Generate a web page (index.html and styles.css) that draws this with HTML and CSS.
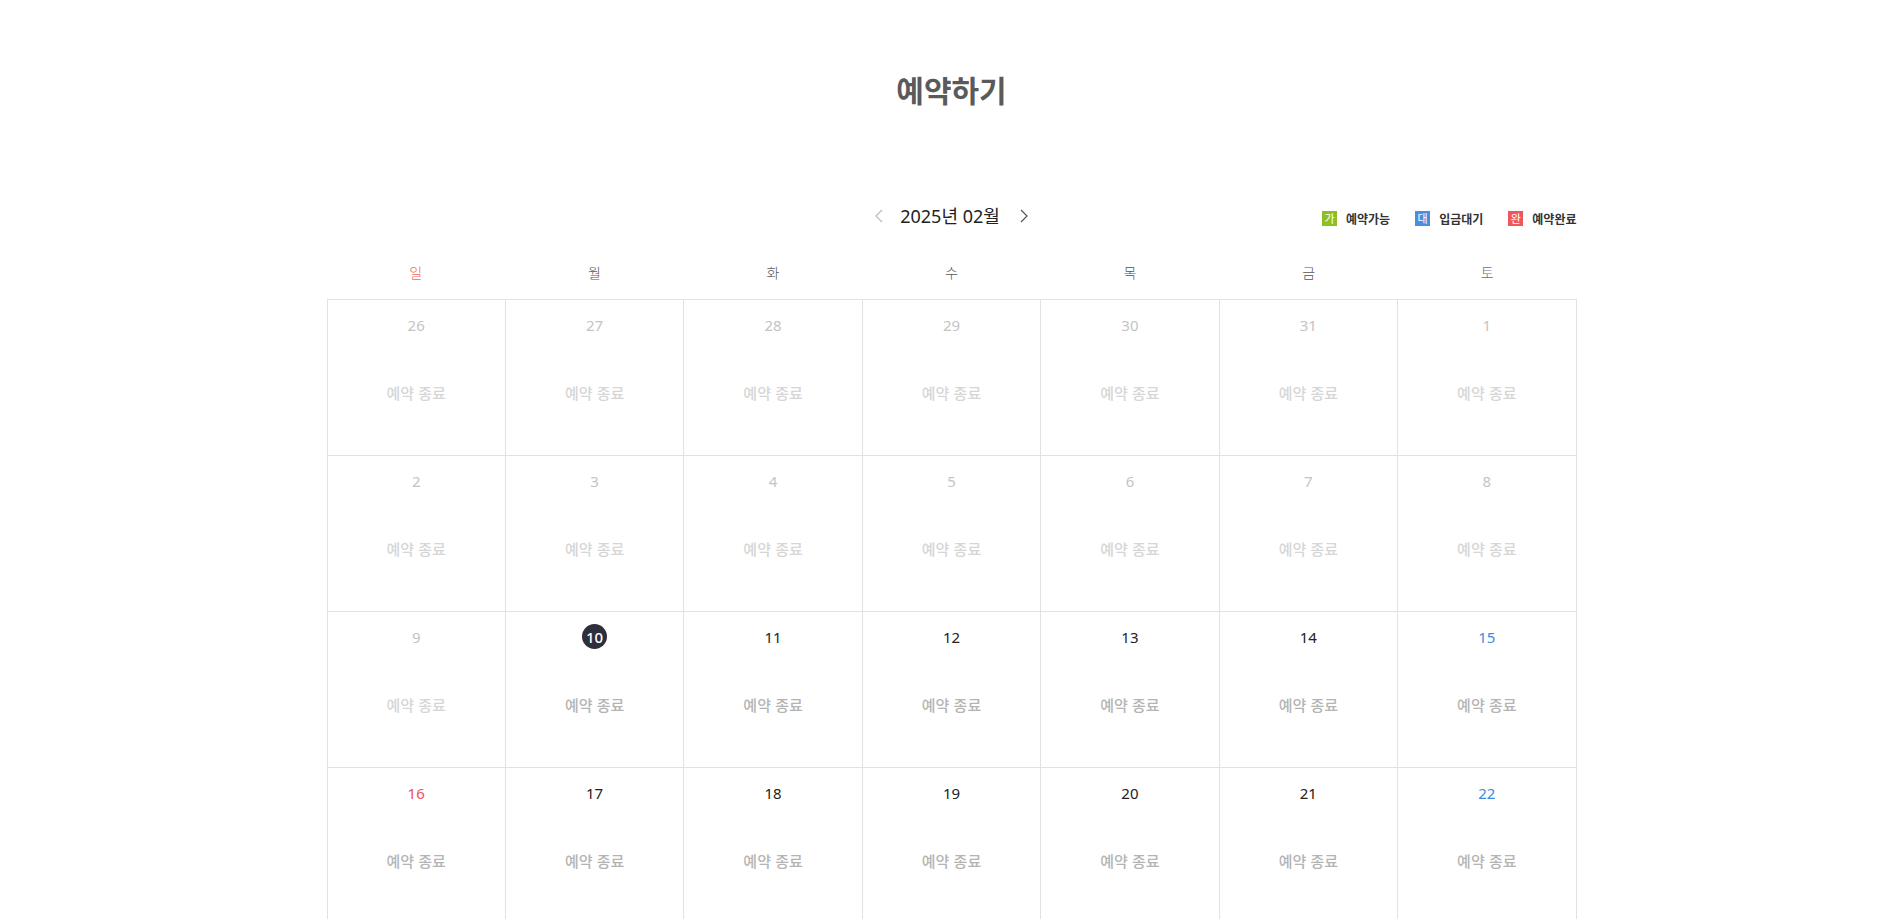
FILE: index.html
```
<!DOCTYPE html>
<html lang="ko">
<head>
<meta charset="utf-8">
<title>예약하기</title>
<link rel="stylesheet" href="styles.css">
</head>
<body>
<main class="page">
  <h1 class="title">예약하기</h1>
  <section class="calendar">
    <div class="cal-top">
      <div class="spacer"></div>
      <div class="month-nav">
        <button class="nav-btn prev" aria-label="이전 달"><svg width="8" height="14" viewBox="0 0 8 14"><polyline points="7,1 1,7 7,13" fill="none" stroke="#bbbbbb" stroke-width="1.2"/></svg></button>
        <span class="month-label">2025년 02월</span>
        <button class="nav-btn next" aria-label="다음 달"><svg width="8" height="14" viewBox="0 0 8 14"><polyline points="1,1 7,7 1,13" fill="none" stroke="#555555" stroke-width="1.2"/></svg></button>
      </div>
      <ul class="legend">
        <li><span class="badge green">가</span>예약가능</li>
        <li><span class="badge blue">대</span>입금대기</li>
        <li><span class="badge red">완</span>예약완료</li>
      </ul>
    </div>
    <div class="weekdays">
      <div class="wd sun">일</div>
      <div class="wd">월</div>
      <div class="wd">화</div>
      <div class="wd">수</div>
      <div class="wd">목</div>
      <div class="wd">금</div>
      <div class="wd sat">토</div>
    </div>
    <div class="grid">
      <div class="cell past"><span class="num">26</span><span class="status">예약 종료</span></div>
      <div class="cell past"><span class="num">27</span><span class="status">예약 종료</span></div>
      <div class="cell past"><span class="num">28</span><span class="status">예약 종료</span></div>
      <div class="cell past"><span class="num">29</span><span class="status">예약 종료</span></div>
      <div class="cell past"><span class="num">30</span><span class="status">예약 종료</span></div>
      <div class="cell past"><span class="num">31</span><span class="status">예약 종료</span></div>
      <div class="cell past"><span class="num">1</span><span class="status">예약 종료</span></div>

      <div class="cell past"><span class="num">2</span><span class="status">예약 종료</span></div>
      <div class="cell past"><span class="num">3</span><span class="status">예약 종료</span></div>
      <div class="cell past"><span class="num">4</span><span class="status">예약 종료</span></div>
      <div class="cell past"><span class="num">5</span><span class="status">예약 종료</span></div>
      <div class="cell past"><span class="num">6</span><span class="status">예약 종료</span></div>
      <div class="cell past"><span class="num">7</span><span class="status">예약 종료</span></div>
      <div class="cell past"><span class="num">8</span><span class="status">예약 종료</span></div>

      <div class="cell past"><span class="num">9</span><span class="status">예약 종료</span></div>
      <div class="cell today"><span class="num">10</span><span class="status">예약 종료</span></div>
      <div class="cell"><span class="num">11</span><span class="status">예약 종료</span></div>
      <div class="cell"><span class="num">12</span><span class="status">예약 종료</span></div>
      <div class="cell"><span class="num">13</span><span class="status">예약 종료</span></div>
      <div class="cell"><span class="num">14</span><span class="status">예약 종료</span></div>
      <div class="cell sat"><span class="num">15</span><span class="status">예약 종료</span></div>

      <div class="cell sun"><span class="num">16</span><span class="status">예약 종료</span></div>
      <div class="cell"><span class="num">17</span><span class="status">예약 종료</span></div>
      <div class="cell"><span class="num">18</span><span class="status">예약 종료</span></div>
      <div class="cell"><span class="num">19</span><span class="status">예약 종료</span></div>
      <div class="cell"><span class="num">20</span><span class="status">예약 종료</span></div>
      <div class="cell"><span class="num">21</span><span class="status">예약 종료</span></div>
      <div class="cell sat"><span class="num">22</span><span class="status">예약 종료</span></div>

      <div class="cell sun"><span class="num">23</span><span class="status">예약 종료</span></div>
      <div class="cell"><span class="num">24</span><span class="status">예약 종료</span></div>
      <div class="cell"><span class="num">25</span><span class="status">예약 종료</span></div>
      <div class="cell"><span class="num">26</span><span class="status">예약 종료</span></div>
      <div class="cell"><span class="num">27</span><span class="status">예약 종료</span></div>
      <div class="cell"><span class="num">28</span><span class="status">예약 종료</span></div>
      <div class="cell past"><span class="num">1</span><span class="status">예약 종료</span></div>
    </div>
  </section>
</main>
</body>
</html>
```
FILE: styles.css
```
* { box-sizing: border-box; }
html, body { margin: 0; padding: 0; background: #fff; }
body {
  font-family: "Noto Sans", "Noto Sans CJK KR", sans-serif;
  color: #222;
}
.page { padding-top: 69px; padding-bottom: 80px; }
.title {
  margin: 0;
  text-align: center;
  font-family: "Noto Sans CJK KR", sans-serif;
  font-size: 30px;
  line-height: 40px;
  font-weight: 700;
  color: #5a5a5a;
}
.calendar { width: 1250px; margin: 92px auto 0; }
.cal-top {
  display: grid;
  grid-template-columns: 1fr auto 1fr;
  align-items: center;
  height: 30px;
}
.month-nav { display: flex; align-items: center; }
.nav-btn {
  border: 0; background: none; padding: 0; margin: 0;
  width: 8px; height: 14px; display: flex; cursor: pointer;
}
.nav-btn.prev { margin-right: 17px; }
.nav-btn.next { margin-left: 20px; }
.month-label {
  font-family: "Noto Sans", "Noto Sans CJK KR", sans-serif;
  font-size: 18px;
  line-height: 30px;
  color: #222;
}
.legend {
  justify-self: end;
  display: flex;
  align-items: center;
  gap: 25px;
  list-style: none;
  margin: 0; padding: 0;
  font-family: "Noto Sans CJK KR", sans-serif;
  font-size: 12px;
  font-weight: 700;
  color: #333;
  position: relative;
  top: 2px;
}
.legend li { display: flex; align-items: center; }
.badge {
  width: 15px; height: 15px;
  display: inline-flex; align-items: center; justify-content: center;
  color: #fff; font-weight: 400; font-size: 11px; line-height: 1;
  margin-right: 9px;
}
.badge.green { background: #8cbf26; }
.badge.blue { background: #4a8fdc; }
.badge.red { background: #f0575a; }
.weekdays {
  display: grid;
  grid-template-columns: repeat(7, 1fr);
  margin-top: 22px;
  padding-bottom: 8px;
}
.wd {
  text-align: center;
  font-family: "Noto Sans CJK KR", sans-serif;
  font-size: 14px;
  font-weight: 300;
  line-height: 38px;
  color: #555;
}
.wd.sun { color: #f06a5a; }
.wd.sat { color: #5a7596; }
.grid {
  display: grid;
  grid-template-columns: repeat(7, 1fr);
  border-top: 1px solid #e2e2e2;
  border-left: 1px solid #e2e2e2;
}
.cell {
  height: 156px;
  border-right: 1px solid #e2e2e2;
  border-bottom: 1px solid #e2e2e2;
  display: flex;
  flex-direction: column;
  align-items: center;
  padding-top: 12px;
}
.num {
  display: inline-flex; align-items: center; justify-content: center;
  min-width: 25px; height: 25px;
  font-size: 15px;
  color: #222;
}
.status {
  margin-top: 45px;
  font-family: "Noto Sans CJK KR", sans-serif;
  font-size: 15px;
  line-height: 22px;
  font-weight: 500;
  color: #b4b4b4;
}
.cell.past .num { color: #c4c4c4; }
.cell.past .status { color: #d6d6d6; }
.cell.sat .num { color: #3d8be0; }
.cell.sun .num { color: #f0505a; }
.cell.today .num {
  width: 25px; border-radius: 50%;
  background: #2e2e3c; color: #fff;
  font-weight: 500;
}
```
